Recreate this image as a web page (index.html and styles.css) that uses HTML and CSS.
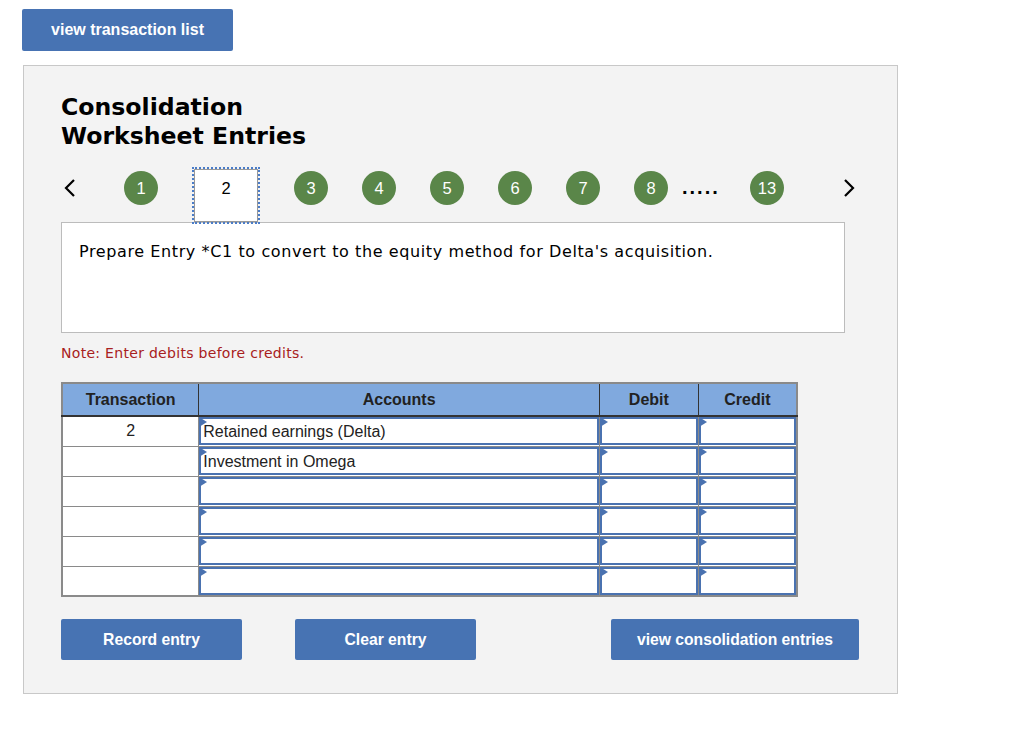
FILE: index.html
```html
<!DOCTYPE html>
<html lang="en">
<head>
  <meta charset="UTF-8">
  <title>Consolidation Worksheet Entries</title>
  <link rel="stylesheet" href="styles.css">
</head>
<body>

<div class="page">
  <button class="btn btn-top">view transaction list</button>

  <div class="panel">
    <h1 class="title">Consolidation<br>Worksheet Entries</h1>

    <div class="steps-nav">
      <span class="arrow arrow-prev">
        <svg width="14" height="20" viewBox="0 0 14 20"><path d="M11 2 L3 10 L11 18" fill="none" stroke="#000" stroke-width="2.2"/></svg>
      </span>
      <span class="step">1</span>
      <span class="step-current">2</span>
      <span class="step">3</span>
      <span class="step">4</span>
      <span class="step">5</span>
      <span class="step">6</span>
      <span class="step">7</span>
      <span class="step">8</span>
      <span class="dots">.....</span>
      <span class="step step-last">13</span>
      <span class="arrow arrow-next">
        <svg width="14" height="20" viewBox="0 0 14 20"><path d="M3 2 L11 10 L3 18" fill="none" stroke="#000" stroke-width="2.2"/></svg>
      </span>
    </div>

    <div class="prompt">Prepare Entry *C1 to convert to the equity method for Delta's acquisition.</div>

    <div class="note">Note: Enter debits before credits.</div>

    <table class="entries">
      <thead>
        <tr>
          <th class="col-trans">Transaction</th>
          <th class="col-acct">Accounts</th>
          <th class="col-num">Debit</th>
          <th class="col-num">Credit</th>
        </tr>
      </thead>
      <tbody>
        <tr>
          <td class="trans">2</td>
          <td><div class="field">Retained earnings (Delta)</div></td>
          <td><div class="field"></div></td>
          <td><div class="field"></div></td>
        </tr>
        <tr>
          <td class="trans"></td>
          <td><div class="field">Investment in Omega</div></td>
          <td><div class="field"></div></td>
          <td><div class="field"></div></td>
        </tr>
        <tr>
          <td class="trans"></td>
          <td><div class="field"></div></td>
          <td><div class="field"></div></td>
          <td><div class="field"></div></td>
        </tr>
        <tr>
          <td class="trans"></td>
          <td><div class="field"></div></td>
          <td><div class="field"></div></td>
          <td><div class="field"></div></td>
        </tr>
        <tr>
          <td class="trans"></td>
          <td><div class="field"></div></td>
          <td><div class="field"></div></td>
          <td><div class="field"></div></td>
        </tr>
        <tr>
          <td class="trans"></td>
          <td><div class="field"></div></td>
          <td><div class="field"></div></td>
          <td><div class="field"></div></td>
        </tr>
      </tbody>
    </table>

    <div class="actions">
      <button class="btn btn-action">Record entry</button>
      <button class="btn btn-action btn-clear">Clear entry</button>
      <button class="btn btn-action btn-view">view consolidation entries</button>
    </div>
  </div>
</div>

</body>
</html>
```

FILE: styles.css
```css
* {
  margin: 0;
  padding: 0;
  box-sizing: border-box;
}
body {
  font-family: "DejaVu Sans", Verdana, sans-serif;
  background: #fff;
  color: #000;
}

.page {
  padding: 9px 0 0 22px;
}

.btn {
  background: #4773b3;
  color: #fff;
  border: none;
  border-radius: 2px;
  font-family: "Liberation Sans", Arial, sans-serif;
  font-weight: bold;
  font-size: 15.7px;
  cursor: pointer;
}

.btn-top {
  display: block;
  width: 211px;
  height: 42px;
  font-size: 16px;
}

.panel {
  width: 875px;
  height: 629px;
  margin: 14px 0 0 1px;
  background: #f3f3f3;
  border: 1px solid #c8c8c8;
  padding: 27px 0 0 37px;
}

.title {
  font-size: 23.6px;
  font-weight: bold;
  line-height: 29px;
}

.steps-nav {
  display: flex;
  align-items: flex-start;
  height: 42px;
  margin-top: 16px;
}

.arrow {
  width: 18px;
  height: 34px;
  margin-top: 4px;
  display: flex;
  align-items: center;
  justify-content: center;
}

.step {
  width: 34px;
  height: 34px;
  margin-top: 4px;
  margin-left: 34px;
  border-radius: 50%;
  background: #5a8649;
  color: #fff;
  font-family: "Liberation Sans", Arial, sans-serif;
  font-size: 16.5px;
  display: flex;
  align-items: center;
  justify-content: center;
}

.arrow-prev + .step {
  margin-left: 45px;
}

.step-current {
  position: relative;
  width: 64px;
  height: 53px;
  margin: 2px 2px 0 36px;
  background: #fff;
  border: 1px solid #999;
  outline: 2px dotted #4a7cc8;
  font-family: "Liberation Sans", Arial, sans-serif;
  font-size: 16.5px;
  text-align: center;
  padding-top: 9px;
}

.dots {
  margin-left: 14px;
  width: 42px;
  margin-top: 8px;
  font-family: "Liberation Sans", Arial, sans-serif;
  font-size: 20px;
  font-weight: bold;
  letter-spacing: 2px;
  line-height: 24px;
}

.step-last {
  margin-left: 26px;
}

.arrow-next {
  margin-left: 56px;
}

.prompt {
  width: 784px;
  height: 111px;
  margin-top: 13px;
  background: #fff;
  border: 1px solid #bcbcbc;
  padding: 19px 17px;
  font-size: 16px;
  letter-spacing: 0.6px;
  line-height: 20px;
}

.note {
  margin-top: 11px;
  color: #a82020;
  font-size: 14px;
  letter-spacing: 0.3px;
  line-height: 18px;
}

.entries {
  margin-top: 20px;
  width: 737px;
  border-collapse: collapse;
  border: 2px solid #8a8a8a;
  font-family: "Liberation Sans", Arial, sans-serif;
  font-size: 16px;
}

.entries th {
  height: 33px;
  background: #80a9de;
  color: #222;
  font-weight: bold;
  border: 1px solid #333;
  border-top: 2px solid #8a8a8a;
  border-bottom: 2px solid #333;
}

.col-trans { width: 137px; }
.col-acct { width: 402px; }
.col-num { width: 99px; }

.entries td {
  height: 30px;
  padding: 0;
  background: #fff;
  border: 1px solid #8a8a8a;
}

.entries td.trans {
  text-align: center;
  color: #222;
}

.field {
  position: relative;
  height: 28px;
  border: 2px solid #4a72b0;
  padding: 4px 2px 0;
  color: #222;
  line-height: 18px;
}

.field::before {
  content: "";
  position: absolute;
  left: -2px;
  top: -2px;
  border-top: 5px solid transparent;
  border-bottom: 5px solid transparent;
  border-left: 8px solid #4a72b0;
}

.actions {
  display: flex;
  margin-top: 22px;
}

.btn-action {
  width: 181px;
  height: 41px;
}

.btn-clear {
  margin-left: 53px;
}

.btn-view {
  width: 248px;
  margin-left: 135px;
}
```
